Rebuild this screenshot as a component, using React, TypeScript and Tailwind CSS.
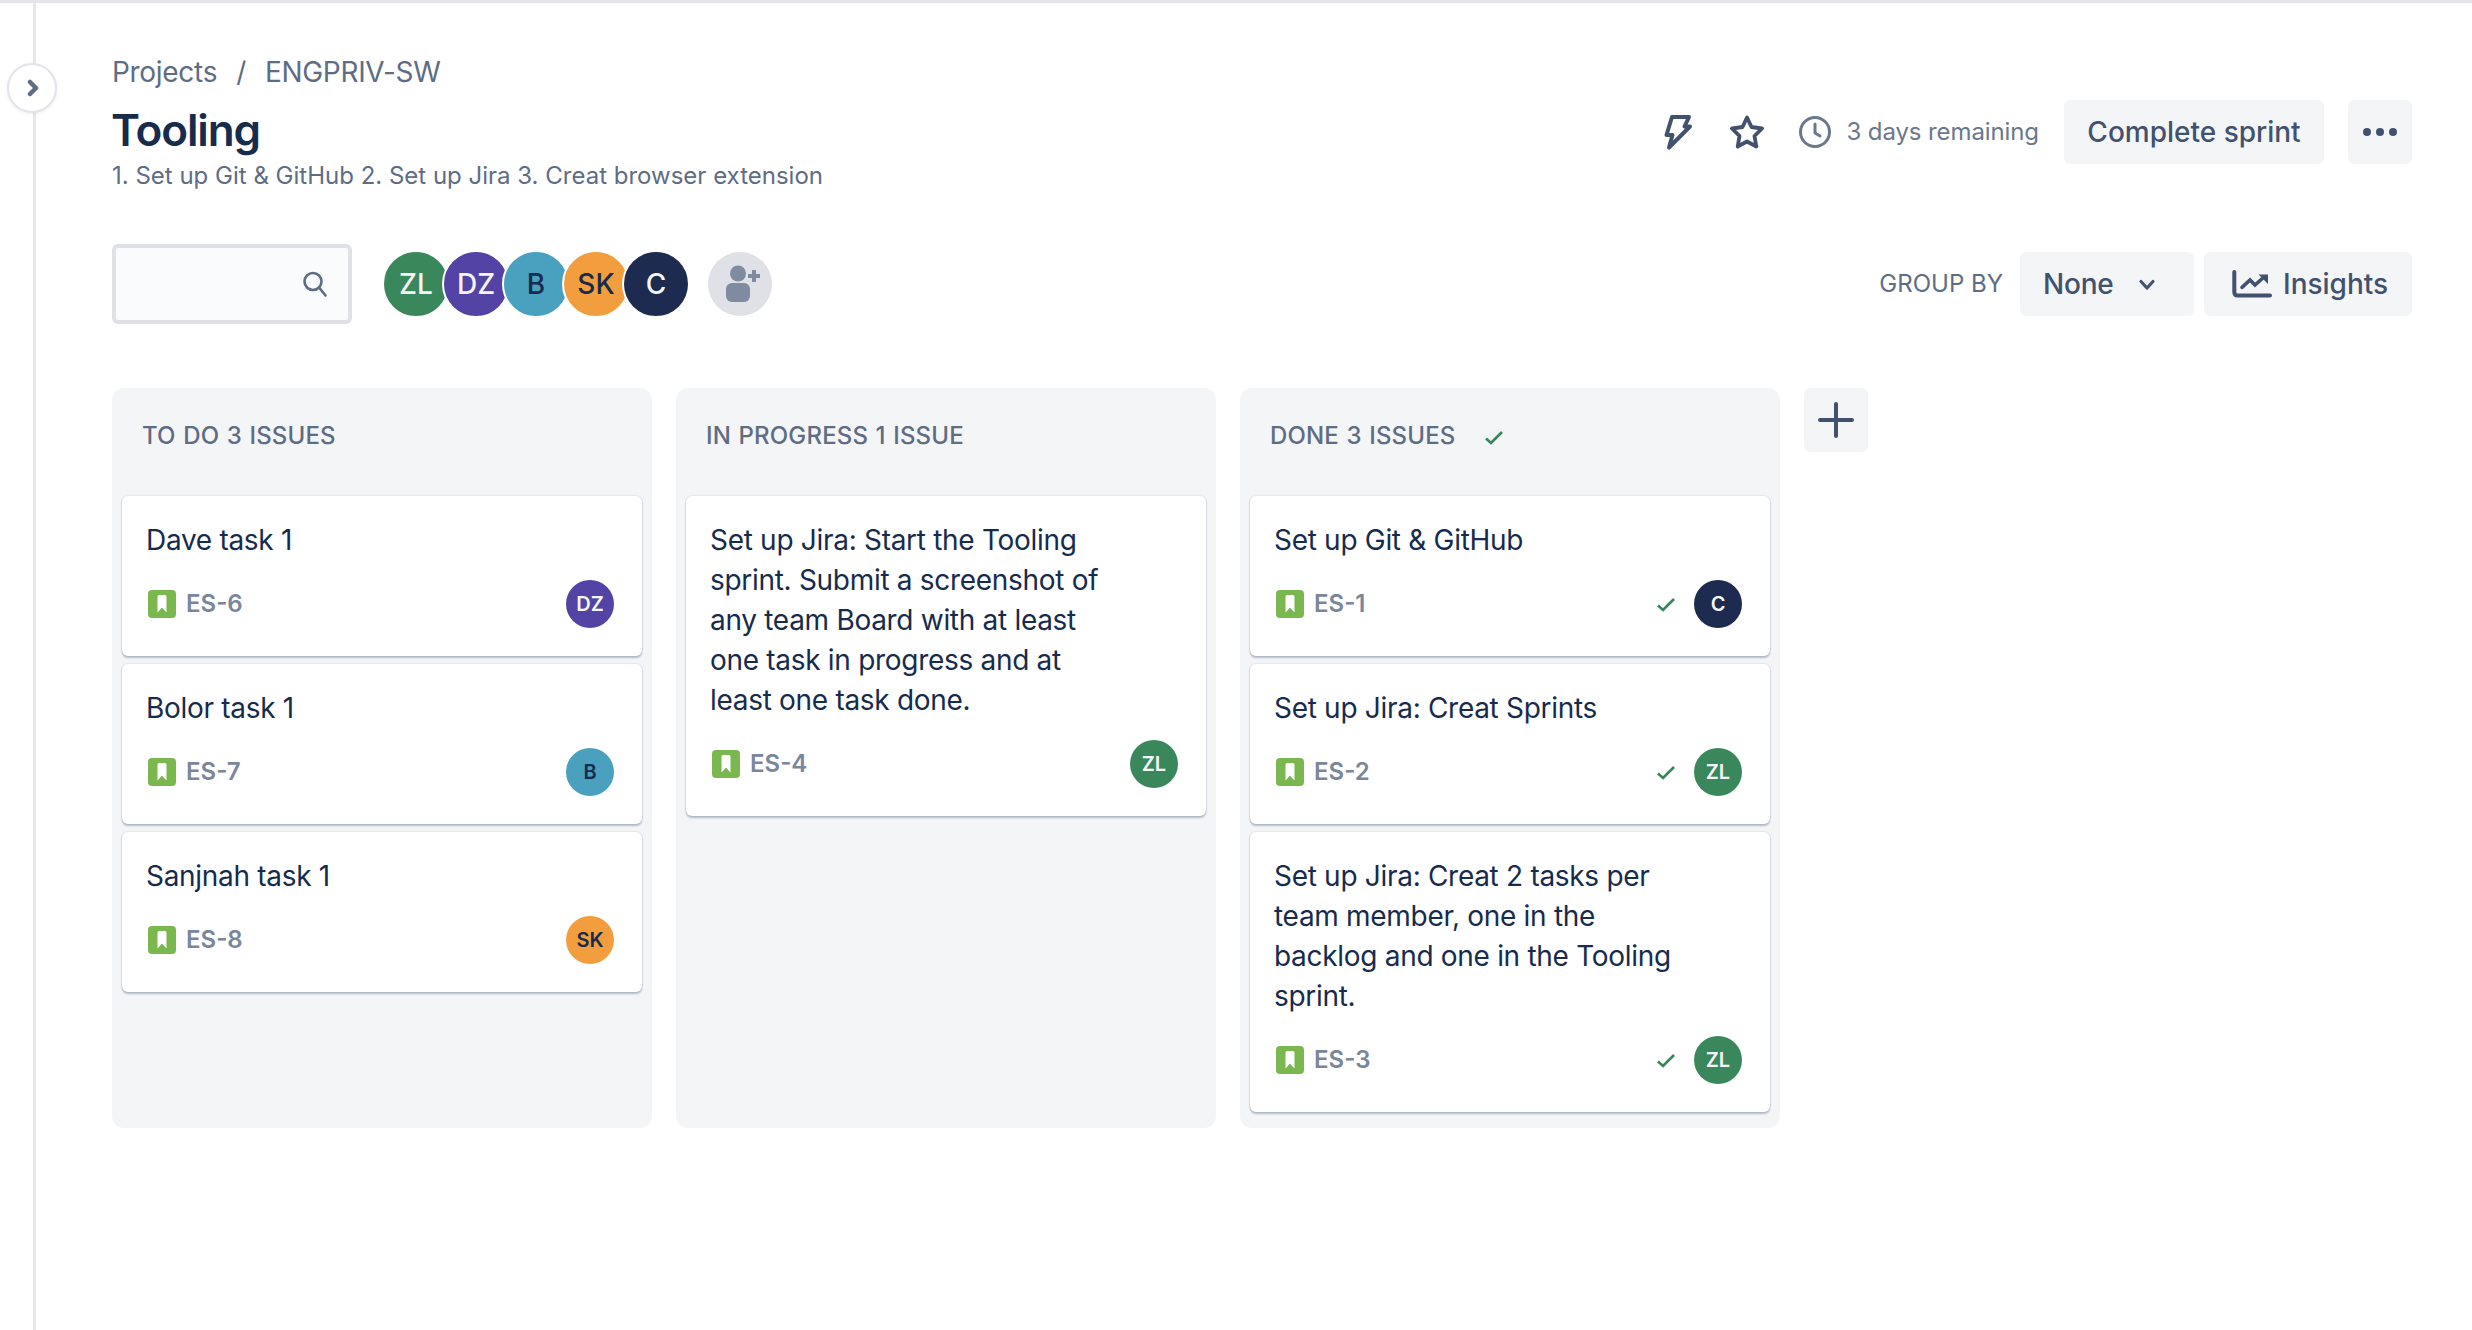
import React from "react";

const Avatar = ({ label, color, dark, size = "card" }: { label: string; color: string; dark?: boolean; size?: "card" | "head" }) => (
  <div
    className={
      (size === "card" ? "w-[48px] h-[48px] text-[20px] font-semibold " : "w-[68px] h-[68px] border-[2px] border-white text-[28px] font-medium -ml-[8px] first:ml-0 ") +
      "rounded-full flex items-center justify-center shrink-0 " +
      (dark ? "text-[#172b4d] " : "text-[#f4f5f7] ") +
      color
    }
  >
    {label}
  </div>
);

const Bookmark = () => (
  <svg width="28" height="28" viewBox="0 0 28 28" className="shrink-0 ml-[2px]">
    <rect width="28" height="28" rx="4" fill="#7ab74f" />
    <path d="M9.500 6.500a1.500 1.500 0 0 1 1.500-1.500h6a1.500 1.500 0 0 1 1.500 1.500V22.500l-4.500-5-4.500 5z" fill="#fff" />
  </svg>
);

const Check = ({ className = "" }: { className?: string }) => (
  <svg width="20" height="16" viewBox="0 0 20 16" className={className}>
    <path d="M2 8.500l5 4.500 11-11" fill="none" stroke="#36845b" strokeWidth="2.600" />
  </svg>
);

const avatars: Record<string, { label: string; color: string; dark?: boolean }> = {
  ZL: { label: "ZL", color: "bg-[#3a875c]" },
  DZ: { label: "DZ", color: "bg-[#5243a5]" },
  B: { label: "B", color: "bg-[#4aa0bf]", dark: true },
  SK: { label: "SK", color: "bg-[#f29d3e]", dark: true },
  C: { label: "C", color: "bg-[#1c2b4f]" },
};

type CardT = { title: string; id: string; who: string; done?: boolean };

const Card = ({ c }: { c: CardT }) => (
  <div className="bg-white rounded-[6px] pt-[24px] pb-[28px] px-[24px] pr-[28px] shadow-[0_2px_2px_rgba(9,30,66,0.25),0_0_2px_rgba(9,30,66,0.2)]">
    <div className="text-[28px] leading-[40px] tracking-[-0.3px] text-[#172b4d] max-w-[415px]">{c.title}</div>
    <div className="mt-[20px] h-[48px] flex items-center">
      <Bookmark />
      <span className="ml-[10px] text-[24px] font-semibold text-[#7a869a]">{c.id}</span>
      <div className="ml-auto flex items-center">
        {c.done && <Check className="mr-[18px] mt-[2px]" />}
        <Avatar {...avatars[c.who]} />
      </div>
    </div>
  </div>
);

const Column = ({ title, cards, done }: { title: string; cards: CardT[]; done?: boolean }) => (
  <div className="w-[540px] h-[740px] bg-[#f4f5f7] rounded-[12px] px-[10px] shrink-0">
    <div className="h-[108px] pt-[29px] pl-[20px] flex items-start">
      <span className="text-[24px] leading-[38px] font-medium tracking-[0.15px] [word-spacing:1px] text-[#5e6c84]">{title}</span>
      {done && <Check className="ml-[29px] mt-[13px]" />}
    </div>
    <div className="flex flex-col gap-[8px]">
      {cards.map((c) => (
        <Card key={c.id} c={c} />
      ))}
    </div>
  </div>
);

export default function App() {
  return (
    <div className="relative h-[1330px] w-[2472px] bg-white overflow-hidden font-['Inter','Liberation_Sans',sans-serif] border-t-[3px] border-[#e3e5ea]">
      <div className="flex h-full">
        <div className="w-[36px] shrink-0 border-r-[3px] border-[#e6e8ec]" />
        <div className="flex-1 pl-[76px] pr-[60px]">
          <div className="flex items-start justify-between h-[241px]">
            <div className="pt-[53px]">
              <div className="text-[28px] leading-[32px] tracking-[-0.3px] text-[#5e6c84]">
                Projects<span className="mx-[19px]">/</span>ENGPRIV-SW
              </div>
              <h1 className="mt-[14px] -ml-[1px] text-[44px] leading-[56px] font-semibold text-[#172b4d] tracking-[-1.1px]">Tooling</h1>
              <div className="mt-[2px] text-[24px] leading-[32px] text-[#5e6c84]">
                1. Set up Git &amp; GitHub 2. Set up Jira 3. Creat browser extension
              </div>
            </div>
            <div className="pt-[97px] flex items-center">
              <svg width="30" height="38" viewBox="0 0 30 38" fill="none" stroke="#42526e" strokeWidth="4" strokeLinejoin="round" className="ml-[2px]">
                <path d="M9 4H26L21.500 13.500H27L6 34.500L9.500 22H3.500Z" />
              </svg>
              <svg width="34" height="34" viewBox="0 0 34 34" fill="none" stroke="#42526e" strokeWidth="3.800" strokeLinejoin="round" className="ml-[37px]">
                <path d="M17 2.500l4.500 9.500 10.500 1.500-7.500 7.500 1.800 10.500-9.300-5-9.300 5 1.800-10.500-7.500-7.500 10.500-1.500z" />
              </svg>
              <svg width="32" height="32" viewBox="0 0 32 32" fill="none" stroke="#6b778c" strokeWidth="3" strokeLinecap="round" strokeLinejoin="round" className="ml-[35px]">
                <circle cx="16" cy="16" r="14.500" />
                <path d="M16 8v9l5 3" />
              </svg>
              <span className="ml-[15px] text-[24px] tracking-[-0.1px] text-[#6b778c]">3 days remaining</span>
              <button className="ml-[25px] w-[260px] h-[64px] rounded-[6px] bg-[#f4f5f7] text-[28px] font-medium text-[#42526e]">Complete sprint</button>
              <button className="ml-[24px] w-[64px] h-[64px] rounded-[6px] bg-[#f4f5f7] flex items-center justify-center gap-[5px]">
                <span className="w-[8px] h-[8px] rounded-full bg-[#42526e]" />
                <span className="w-[8px] h-[8px] rounded-full bg-[#42526e]" />
                <span className="w-[8px] h-[8px] rounded-full bg-[#42526e]" />
              </button>
            </div>
          </div>
          <div className="flex items-center justify-between h-[80px]">
            <div className="flex items-center">
              <div className="w-[240px] h-[80px] border-[4px] border-[#dfe1e6] bg-[#fafbfc] rounded-[6px] flex items-center justify-end pr-[20px]">
                <svg width="26" height="28" viewBox="0 0 26 28" fill="none" stroke="#5e6c84" strokeWidth="2.600" strokeLinecap="round">
                  <circle cx="11" cy="11.500" r="8.500" />
                  <path d="M17.500 18l6 7.500" />
                </svg>
              </div>
              <div className="ml-[30px] flex items-center">
                {["ZL", "DZ", "B", "SK", "C"].map((k) => (
                  <Avatar key={k} {...avatars[k]} size="head" />
                ))}
              </div>
              <div className="ml-[18px] w-[64px] h-[64px] rounded-full bg-[#dfe1e6] flex items-center justify-center">
                <svg width="40" height="40" viewBox="0 0 40 40" fill="#7f8ba0">
                  <circle cx="18" cy="9.500" r="8" />
                  <rect x="6" y="19" width="24" height="19" rx="6" />
                  <path d="M32 6h4v4h4v4h-4v4h-4v-4h-4v-4h4z" />
                </svg>
              </div>
            </div>
            <div className="flex items-center">
              <span className="text-[24px] text-[#5e6c84]">GROUP BY</span>
              <button className="ml-[17px] w-[174px] h-[64px] rounded-[6px] bg-[#f4f5f7] flex items-center pl-[23px] text-[28px] font-medium tracking-[-0.2px] text-[#42526e]">
                None
                <svg width="18" height="12" viewBox="0 0 18 12" fill="none" stroke="#42526e" strokeWidth="3.200" strokeLinecap="round" strokeLinejoin="round" className="ml-[24px] mt-[2px]">
                  <path d="M3 2.500l6 6.500 6-6.500" />
                </svg>
              </button>
              <button className="ml-[10px] w-[208px] h-[64px] rounded-[6px] bg-[#f4f5f7] flex items-center pl-[28px] text-[28px] font-medium text-[#42526e]">
                <svg width="40" height="28" viewBox="0 0 40 28" fill="none" stroke="#42526e" strokeWidth="4" strokeLinecap="round" strokeLinejoin="round">
                  <path d="M2.300 2v20q0 3.500 3.500 3.500H38" />
                  <path d="M10 17.300l8-7.300 5 5 9-8" strokeWidth="3.600" strokeLinejoin="miter" />
                  <path d="M26.500 4.500H36V14z" fill="#42526e" stroke="none" />
                </svg>
                <span className="ml-[11px]">Insights</span>
              </button>
            </div>
          </div>
          <div className="mt-[64px] flex items-start gap-[24px]">
            <Column
              title="TO DO 3 ISSUES"
              cards={[
                { title: "Dave task 1", id: "ES-6", who: "DZ" },
                { title: "Bolor task 1", id: "ES-7", who: "B" },
                { title: "Sanjnah task 1", id: "ES-8", who: "SK" },
              ]}
            />
            <Column
              title="IN PROGRESS 1 ISSUE"
              cards={[
                {
                  title: "Set up Jira: Start the Tooling sprint. Submit a screenshot of any team Board with at least one task in progress and at least one task done.",
                  id: "ES-4",
                  who: "ZL",
                },
              ]}
            />
            <Column
              title="DONE 3 ISSUES"
              done
              cards={[
                { title: "Set up Git & GitHub", id: "ES-1", who: "C", done: true },
                { title: "Set up Jira: Creat Sprints", id: "ES-2", who: "ZL", done: true },
                {
                  title: "Set up Jira: Creat 2 tasks per team member, one in the backlog and one in the Tooling sprint.",
                  id: "ES-3",
                  who: "ZL",
                  done: true,
                },
              ]}
            />
            <button className="w-[64px] h-[64px] rounded-[6px] bg-[#f4f5f7] flex items-center justify-center">
              <svg width="36" height="36" viewBox="0 0 36 36" stroke="#42526e" strokeWidth="4" strokeLinecap="round">
                <path d="M18 2v32M2 18h32" />
              </svg>
            </button>
          </div>
        </div>
      </div>
      <div className="absolute left-[7px] top-[60px] w-[50px] h-[50px] rounded-full bg-white border-[2px] border-[#e3e5ea] shadow-[0_1px_3px_rgba(9,30,66,0.08)] flex items-center justify-center pl-[2px]">
        <svg width="12" height="18" viewBox="0 0 12 18" fill="none" stroke="#5e6c84" strokeWidth="4.500" strokeLinecap="round" strokeLinejoin="round">
          <path d="M3 3l6 6-6 6" />
        </svg>
      </div>
    </div>
  );
}
